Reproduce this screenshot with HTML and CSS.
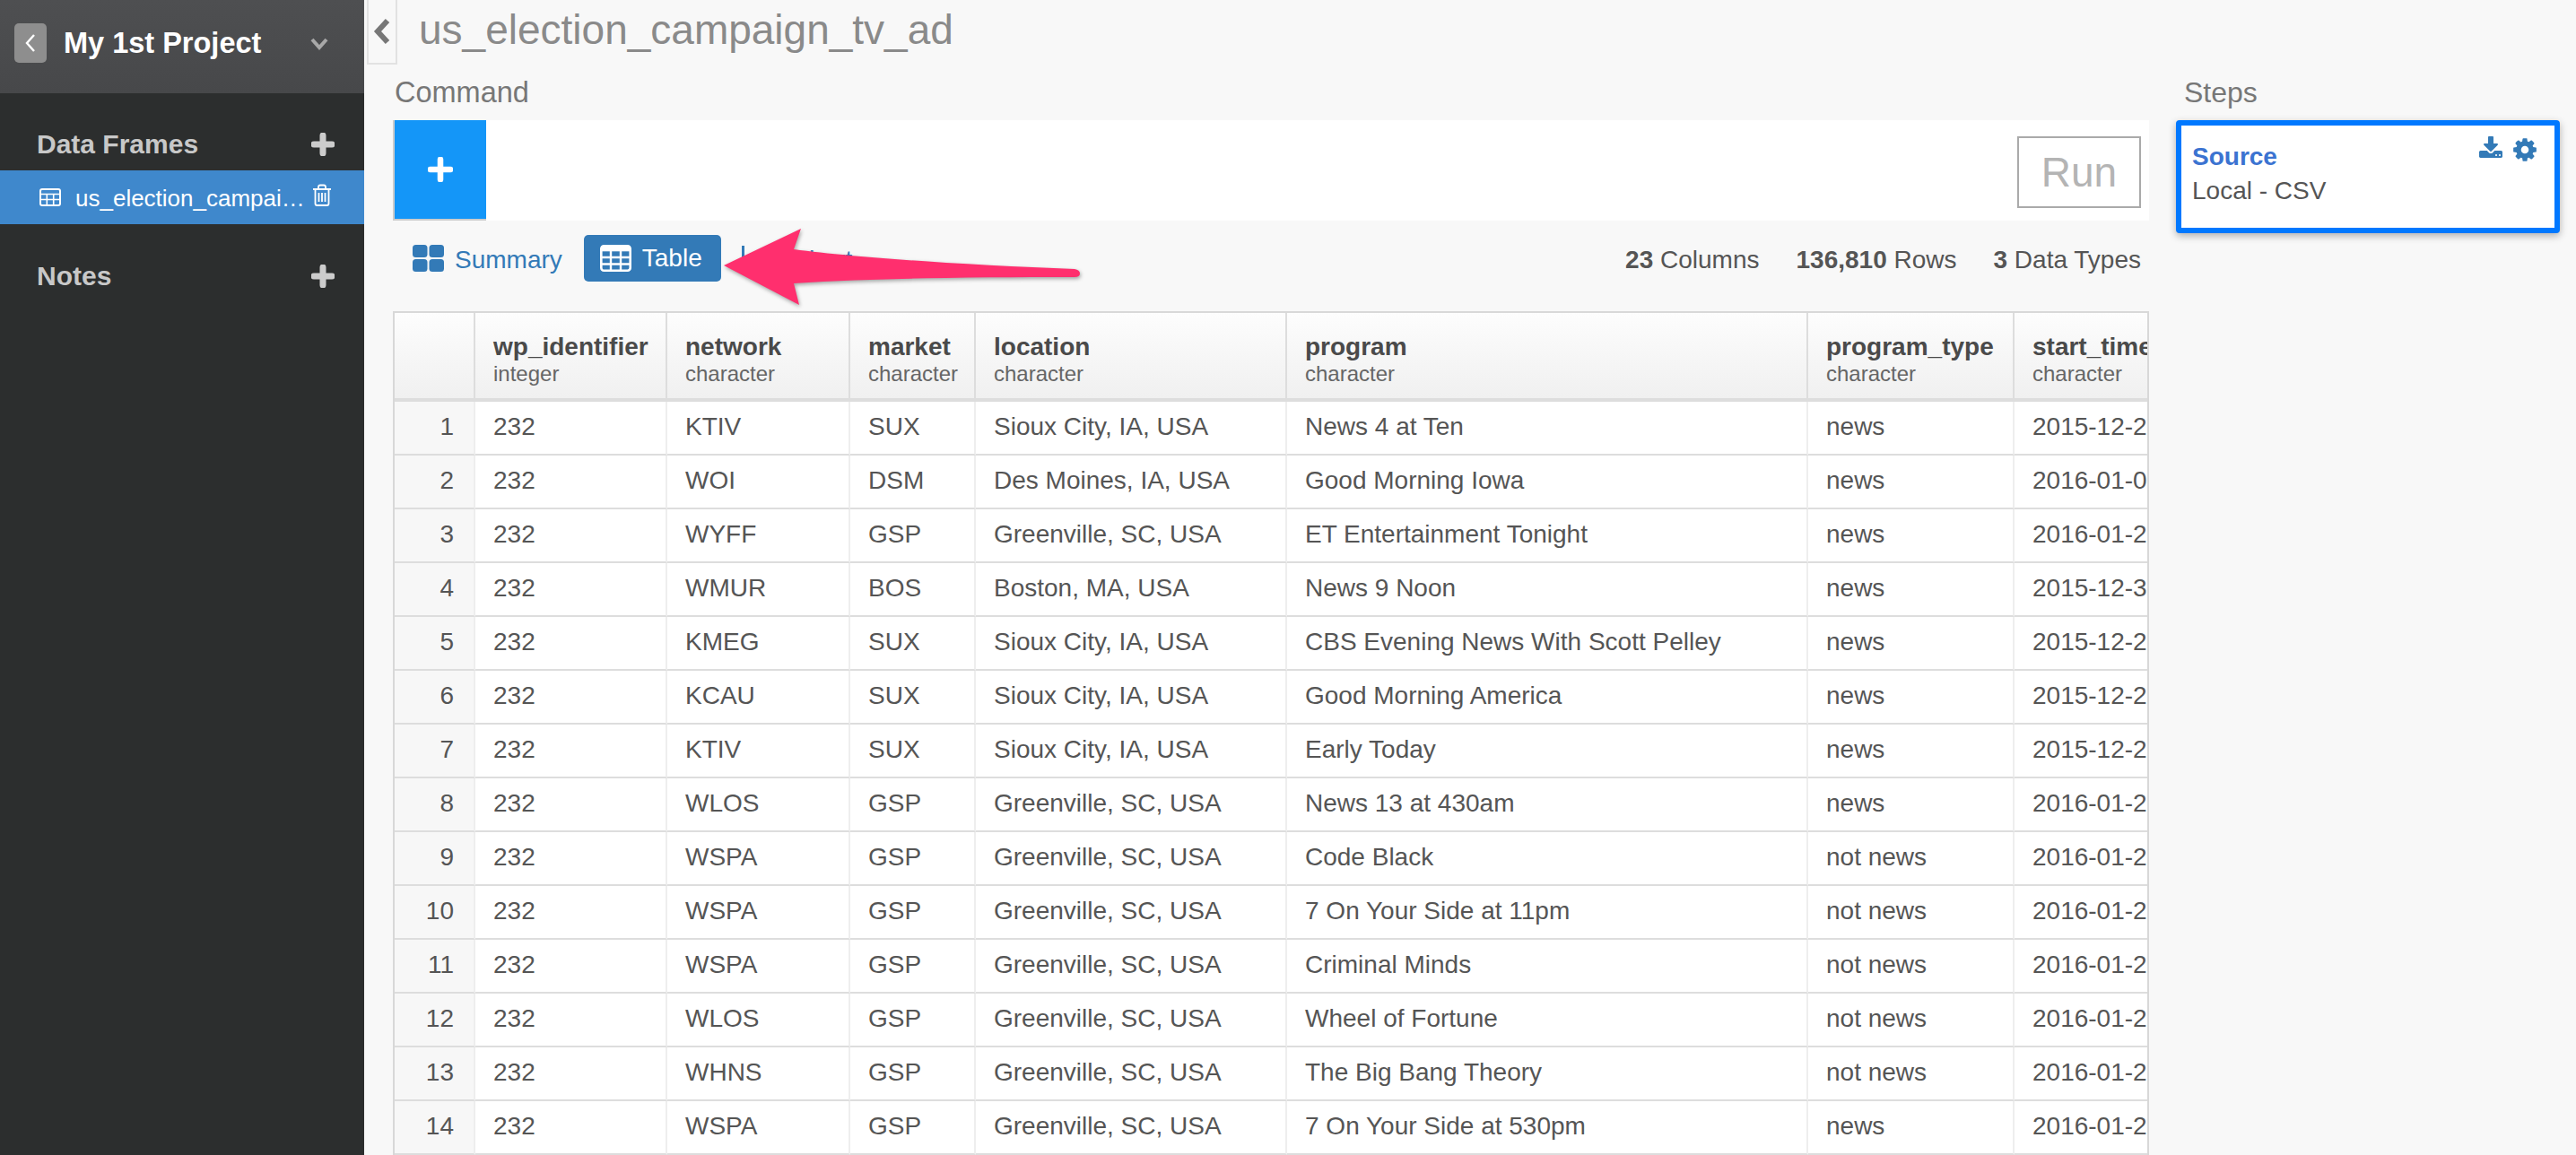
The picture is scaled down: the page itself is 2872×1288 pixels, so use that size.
FILE: index.html
```html
<!DOCTYPE html>
<html lang="en">
<head>
    <meta charset="UTF-8">
    <title>us_election_campaign_tv_ad</title>
    <link rel="stylesheet" href="styles.css">
</head>
<body>
    <aside class="sidebar">
        <div class="project-header">
            <button class="back-btn">
                <svg width="14" height="24" viewBox="0 0 14 24"><polyline points="11,3 3,12 11,21" fill="none" stroke="#fff" stroke-width="2.4"/></svg>
            </button>
            <span class="project-name">My 1st Project</span>
            <svg class="project-caret" width="20" height="14" viewBox="0 0 20 14"><polyline points="2,2 10,11 18,2" fill="none" stroke="#a8a8a8" stroke-width="4"/></svg>
        </div>
        <div class="side-heading">
            <span>Data Frames</span>
            <svg class="side-plus" width="26" height="26" viewBox="0 0 26 26"><path d="M13 3v20M3 13h20" stroke="#ccc" stroke-width="7" stroke-linecap="round"/></svg>
        </div>
        <div class="side-item">
            <svg width="24" height="20" viewBox="0 0 24 20"><rect x="1" y="1" width="22" height="18" rx="2" fill="none" stroke="#fff" stroke-width="2"/><path d="M1 6.500h22M1 12.500h22M8.300 6.500v12M15.700 6.500v12" stroke="#fff" stroke-width="1.600"/></svg>
            <span class="side-item-name">us_election_campai…</span>
            <svg class="side-trash" width="22" height="25" viewBox="0 0 22 25"><path d="M1 6h20M7 6V3.500Q7 1.500 9 1.500h4Q15 1.500 15 3.500V6M3.500 6v16q0 2 2 2h11q2 0 2-2V6M7.500 10v10M11 10v10M14.500 10v10" fill="none" stroke="#fff" stroke-width="1.800"/></svg>
        </div>
        <div class="side-heading side-heading-notes">
            <span>Notes</span>
            <svg class="side-plus" width="26" height="26" viewBox="0 0 26 26"><path d="M13 3v20M3 13h20" stroke="#ccc" stroke-width="7" stroke-linecap="round"/></svg>
        </div>
    </aside>

    <div class="content">
        <div class="title-bar">
            <button class="collapse-btn">
                <svg width="20" height="30" viewBox="0 0 20 30"><polyline points="16,3 5,15 16,27" fill="none" stroke="#777" stroke-width="6"/></svg>
            </button>
            <h1 class="page-title">us_election_campaign_tv_ad</h1>
        </div>

        <div class="panels">
            <main class="command-panel">
                <h2 class="panel-label panel-label-command">Command</h2>
                <div class="command-bar">
                    <button class="add-btn">
                        <svg width="28" height="28" viewBox="0 0 30 30"><path d="M15 3v24M3 15h24" stroke="#fff" stroke-width="7" stroke-linecap="round"/></svg>
                    </button>
                    <button class="run-btn">Run</button>
                </div>

                <div class="tab-row">
                    <a class="tab">
                        <svg width="35" height="30" viewBox="0 0 35 30"><rect x="0" y="0" width="16.500" height="14" rx="3.500"/><rect x="18.500" y="0" width="16.500" height="14" rx="3.500"/><rect x="0" y="16" width="16.500" height="14" rx="3.500"/><rect x="18.500" y="16" width="16.500" height="14" rx="3.500"/></svg>
                        <span class="tab-text">Summary</span>
                    </a>
                    <a class="tab tab-active">
                        <svg width="35" height="30" viewBox="0 0 35 30"><rect x="1.300" y="1.300" width="32.400" height="27.400" rx="3" fill="none" stroke="#fff" stroke-width="2.600"/><rect x="1.300" y="1.300" width="32.400" height="6" fill="#fff"/><path d="M1 14h33M1 21.500h33M12 7v22M23 7v22" stroke="#fff" stroke-width="2.400"/></svg>
                        Table
                    </a>
                    <a class="tab tab-chart">
                        <svg width="36" height="28" viewBox="0 0 36 28"><path d="M1.500 0v26.500H36" fill="none" stroke="#337ab7" stroke-width="3"/></svg>
                        <span class="tab-text">Chart</span>
                    </a>
                    <div class="stats">
                        <span><b>23</b> Columns</span>
                        <span><b>136,810</b> Rows</span>
                        <span><b>3</b> Data Types</span>
                    </div>
                    <svg class="arrow" width="420" height="100" viewBox="798 246 420 100">
                        <path d="M807 296 L893 255 L885 278 C960 288 1090 296 1198 300 Q1204 301 1204 305 Q1204 309 1198 309 C1090 309 980 310 885 316 L891 340 Z"/>
                    </svg>
                </div>

                <div class="table-wrap">
                    <table class="data-table">
                        <colgroup>
                            <col class="col-num"><col class="col-id"><col class="col-network"><col class="col-market"><col class="col-location"><col class="col-program"><col class="col-type"><col class="col-start">
                        </colgroup>
                        <thead>
                            <tr>
                                <th></th>
                                <th>wp_identifier<small>integer</small></th>
                                <th>network<small>character</small></th>
                                <th>market<small>character</small></th>
                                <th>location<small>character</small></th>
                                <th>program<small>character</small></th>
                                <th>program_type<small>character</small></th>
                                <th>start_time<small>character</small></th>
                            </tr>
                        </thead>
                        <tbody>
                            <tr><td class="row-num">1</td><td>232</td><td>KTIV</td><td>SUX</td><td>Sioux City, IA, USA</td><td>News 4 at Ten</td><td>news</td><td>2015-12-2</td></tr>
                            <tr><td class="row-num">2</td><td>232</td><td>WOI</td><td>DSM</td><td>Des Moines, IA, USA</td><td>Good Morning Iowa</td><td>news</td><td>2016-01-0</td></tr>
                            <tr><td class="row-num">3</td><td>232</td><td>WYFF</td><td>GSP</td><td>Greenville, SC, USA</td><td>ET Entertainment Tonight</td><td>news</td><td>2016-01-2</td></tr>
                            <tr><td class="row-num">4</td><td>232</td><td>WMUR</td><td>BOS</td><td>Boston, MA, USA</td><td>News 9 Noon</td><td>news</td><td>2015-12-3</td></tr>
                            <tr><td class="row-num">5</td><td>232</td><td>KMEG</td><td>SUX</td><td>Sioux City, IA, USA</td><td>CBS Evening News With Scott Pelley</td><td>news</td><td>2015-12-2</td></tr>
                            <tr><td class="row-num">6</td><td>232</td><td>KCAU</td><td>SUX</td><td>Sioux City, IA, USA</td><td>Good Morning America</td><td>news</td><td>2015-12-2</td></tr>
                            <tr><td class="row-num">7</td><td>232</td><td>KTIV</td><td>SUX</td><td>Sioux City, IA, USA</td><td>Early Today</td><td>news</td><td>2015-12-2</td></tr>
                            <tr><td class="row-num">8</td><td>232</td><td>WLOS</td><td>GSP</td><td>Greenville, SC, USA</td><td>News 13 at 430am</td><td>news</td><td>2016-01-2</td></tr>
                            <tr><td class="row-num">9</td><td>232</td><td>WSPA</td><td>GSP</td><td>Greenville, SC, USA</td><td>Code Black</td><td>not news</td><td>2016-01-2</td></tr>
                            <tr><td class="row-num">10</td><td>232</td><td>WSPA</td><td>GSP</td><td>Greenville, SC, USA</td><td>7 On Your Side at 11pm</td><td>not news</td><td>2016-01-2</td></tr>
                            <tr><td class="row-num">11</td><td>232</td><td>WSPA</td><td>GSP</td><td>Greenville, SC, USA</td><td>Criminal Minds</td><td>not news</td><td>2016-01-2</td></tr>
                            <tr><td class="row-num">12</td><td>232</td><td>WLOS</td><td>GSP</td><td>Greenville, SC, USA</td><td>Wheel of Fortune</td><td>not news</td><td>2016-01-2</td></tr>
                            <tr><td class="row-num">13</td><td>232</td><td>WHNS</td><td>GSP</td><td>Greenville, SC, USA</td><td>The Big Bang Theory</td><td>not news</td><td>2016-01-2</td></tr>
                            <tr><td class="row-num">14</td><td>232</td><td>WSPA</td><td>GSP</td><td>Greenville, SC, USA</td><td>7 On Your Side at 530pm</td><td>news</td><td>2016-01-2</td></tr>
                        </tbody>
                    </table>
                </div>
            </main>

            <section class="steps-panel">
                <h2 class="panel-label">Steps</h2>
                <div class="step-card">
                    <div class="step-head">
                        <span class="step-title">Source</span>
                        <div class="step-icons">
                            <svg width="28" height="28" viewBox="0 0 1792 1792"><path d="M1344 1344q0-26-19-45t-45-19-45 19-19 45 19 45 45 19 45-19 19-45zm256 0q0-26-19-45t-45-19-45 19-19 45 19 45 45 19 45-19 19-45zm128-224v320q0 40-28 68t-68 28h-1472q-40 0-68-28t-28-68v-320q0-40 28-68t68-28h465l135 136q58 56 136 56t136-56l136-136h464q40 0 68 28t28 68zm-325-569q17 41-14 70l-448 448q-18 19-45 19t-45-19l-448-448q-31-29-14-70 17-39 59-39h256v-448q0-26 19-45t45-19h256q26 0 45 19t19 45v448h256q42 0 59 39z"/></svg>
                            <svg width="30" height="30" viewBox="0 0 1792 1792"><path d="M1152 896q0-106-75-181t-181-75-181 75-75 181 75 181 181 75 181-75 75-181zm512-109v222q0 12-8 24t-20 13l-185 28q-19 54-39 91 35 50 107 138 10 12 10 25t-9 23q-27 37-99 108t-94 71q-12 0-26-9l-138-108q-44 23-91 38-16 136-29 186-7 28-36 28h-222q-14 0-24.500-8.500t-11.500-21.500l-28-184q-49-16-90-37l-141 107q-10 9-25 9-14 0-25-11-126-114-165-168-7-10-7-23 0-12 8-23 15-21 51-66.500t54-70.500q-27-50-41-99l-183-27q-13-2-21-12.500t-8-23.500v-222q0-12 8-23t19-13l186-28q14-46 39-92-40-57-107-138-10-12-10-24 0-10 9-23 26-36 98.500-107.500t94.500-71.500q13 0 26 10l138 107q44-23 91-38 16-136 29-186 7-28 36-28h222q14 0 24.500 8.500t11.500 21.500l28 184q49 16 90 37l142-107q9-9 24-9 13 0 25 10 129 119 165 170 7 8 7 22 0 12-8 23-15 21-51 66.500t-54 70.500q26 50 41 98l183 28q13 2 21 12.500t8 23.500z"/></svg>
                        </div>
                    </div>
                    <div class="step-sub">Local - CSV</div>
                </div>
            </section>
        </div>
    </div>
</body>
</html>
```

FILE: styles.css
```css
html, body {
    height: 100%;
}

body {
    margin: 0;
    display: flex;
    overflow: hidden;
    font-family: "Liberation Sans", Arial, sans-serif;
    font-size: 28px;
    color: #555;
    background-color: #f8f8f8;
}

button {
    font-family: inherit;
    padding: 0;
    border: none;
}

/* sidebar */
.sidebar {
    width: 406px;
    flex-shrink: 0;
    background-color: #2c2e2e;
}

.project-header {
    height: 104px;
    box-sizing: border-box;
    padding: 26px 40px 0 16px;
    display: flex;
    align-items: flex-start;
    background: linear-gradient(#4e4f51, #47484a);
}

.back-btn {
    width: 36px;
    height: 44px;
    border-radius: 5px;
    background-color: #8e8e8e;
    display: flex;
    justify-content: center;
    align-items: center;
}

.project-name {
    margin-left: 19px;
    line-height: 44px;
    font-size: 32.5px;
    font-weight: bold;
    color: #fff;
    flex: 1;
}

.project-caret {
    margin-top: 16px;
}

.side-heading {
    height: 86px;
    box-sizing: border-box;
    padding: 28px 33px 0 41px;
    display: flex;
    justify-content: space-between;
    align-items: center;
    font-size: 30px;
    font-weight: bold;
    color: #c8c8c8;
}

.side-heading-notes {
    height: 116px;
    padding-top: 0;
}

.side-item {
    height: 60px;
    box-sizing: border-box;
    padding-left: 44px;
    display: flex;
    align-items: center;
    background-color: #3f88cc;
    color: #fff;
}

.side-item-name {
    margin: 3px 0 0 16px;
    font-size: 26px;
}

.side-trash {
    margin-left: 8px;
    margin-top: -6px;
}

/* main area */
.content {
    flex: 1;
    min-width: 0;
    padding-left: 3px;
}

.title-bar {
    height: 72px;
    display: flex;
}

.collapse-btn {
    width: 34px;
    height: 72px;
    box-sizing: border-box;
    border-left: 2px solid #e2e2e2;
    border-right: 2px solid #e2e2e2;
    border-bottom: 2px solid #e2e2e2;
    background-color: #f8f8f8;
    display: flex;
    justify-content: center;
    align-items: center;
}

.page-title {
    margin: -3px 0 0 24px;
    font-size: 46px;
    line-height: 72px;
    font-weight: normal;
    color: #8a8a8a;
}

.panels {
    display: flex;
    padding-left: 29px;
}

.panel-label {
    margin: 0;
    height: 62px;
    line-height: 62px;
    font-size: 32px;
    font-weight: normal;
    color: #777;
}

.panel-label-command {
    padding-left: 2px;
    font-size: 32.5px;
}

.command-panel {
    width: 1958px;
    flex-shrink: 0;
}

.command-bar {
    height: 112px;
    display: flex;
    justify-content: space-between;
    background-color: #fff;
}

.add-btn {
    width: 104px;
    height: 112px;
    box-sizing: border-box;
    border-left: 2px solid #ccc;
    border-bottom: 2px solid #ccc;
    background-color: #1496f8;
    display: flex;
    justify-content: center;
    align-items: center;
}

.run-btn {
    width: 138px;
    height: 80px;
    margin: 18px 9px 0 0;
    border: 2px solid #aaa;
    background-color: #fff;
    font-size: 46px;
    color: #b4b4b4;
}

.tab-row {
    height: 101px;
    position: relative;
    display: flex;
    align-items: flex-start;
    padding: 16px 0 0 22px;
    box-sizing: border-box;
}

.tab {
    height: 52px;
    display: flex;
    align-items: center;
    gap: 12px;
    color: #337ab7;
    fill: #337ab7;
}

.tab-text {
    margin-top: 4px;
}

.tab-active {
    margin-left: 24px;
    padding: 0 21px 0 18px;
    border-radius: 5px;
    background-color: #337ab7;
    color: #fff;
}

.tab-chart {
    margin-left: 23px;
    gap: 19px;
}

.stats {
    margin-left: auto;
    padding: 2px 9px 0 0;
    line-height: 52px;
    display: flex;
    gap: 41px;
}

.arrow {
    position: absolute;
    left: 360px;
    top: 0;
    fill: #ff2f6e;
    overflow: visible;
    filter: drop-shadow(1px 2px 2px rgba(0, 0, 0, 0.35));
}

/* data table */
.table-wrap {
    height: 1000px;
    border: 2px solid #d8d8d8;
    border-bottom: none;
    overflow: hidden;
}

.data-table {
    table-layout: fixed;
    width: 1954px;
    border-collapse: separate;
    border-spacing: 0;
    background-color: #fff;
}

.col-num { width: 90px; }
.col-id { width: 214px; }
.col-network { width: 204px; }
.col-market { width: 140px; }
.col-location { width: 347px; }
.col-program { width: 581px; }
.col-type { width: 230px; }
.col-start { width: 148px; }

.data-table th,
.data-table td {
    box-sizing: border-box;
    padding: 0 0 0 20px;
    white-space: nowrap;
    overflow: hidden;
    text-align: left;
}

.data-table th {
    height: 99px;
    padding-top: 6px;
    border-right: 2px solid #ddd;
    border-bottom: 4px solid #ddd;
    background: linear-gradient(#fdfdfd, #f0f0f0);
    line-height: 34px;
    font-weight: bold;
    color: #4a4a4a;
}

.data-table th small {
    display: block;
    font-size: 24px;
    line-height: 26px;
    font-weight: normal;
    color: #666;
}

.data-table td {
    height: 60px;
    padding-bottom: 2px;
    border-right: 2px solid #eee;
    border-bottom: 2px solid #ddd;
}

.data-table th:last-child,
.data-table td:last-child {
    border-right: none;
}

.data-table td.row-num {
    padding: 0 22px 2px 0;
    text-align: right;
    background-color: #f7f7f7;
}

/* steps */
.steps-panel {
    margin-left: 30px;
    width: 428px;
}

.steps-panel .panel-label {
    padding-left: 9px;
}

.step-card {
    height: 126px;
    box-sizing: border-box;
    padding: 12px 18px 0 12px;
    border: 6px solid #0078ff;
    border-radius: 4px;
    background-color: #fff;
    box-shadow: 0 3px 8px rgba(0, 0, 0, 0.3);
}

.step-head {
    display: flex;
    justify-content: space-between;
}

.step-title {
    margin-top: 7px;
    font-weight: bold;
    color: #3b73d1;
}

.step-icons {
    display: flex;
    gap: 9px;
    fill: #337ab7;
}

.step-sub {
    margin-top: 6px;
}
```
